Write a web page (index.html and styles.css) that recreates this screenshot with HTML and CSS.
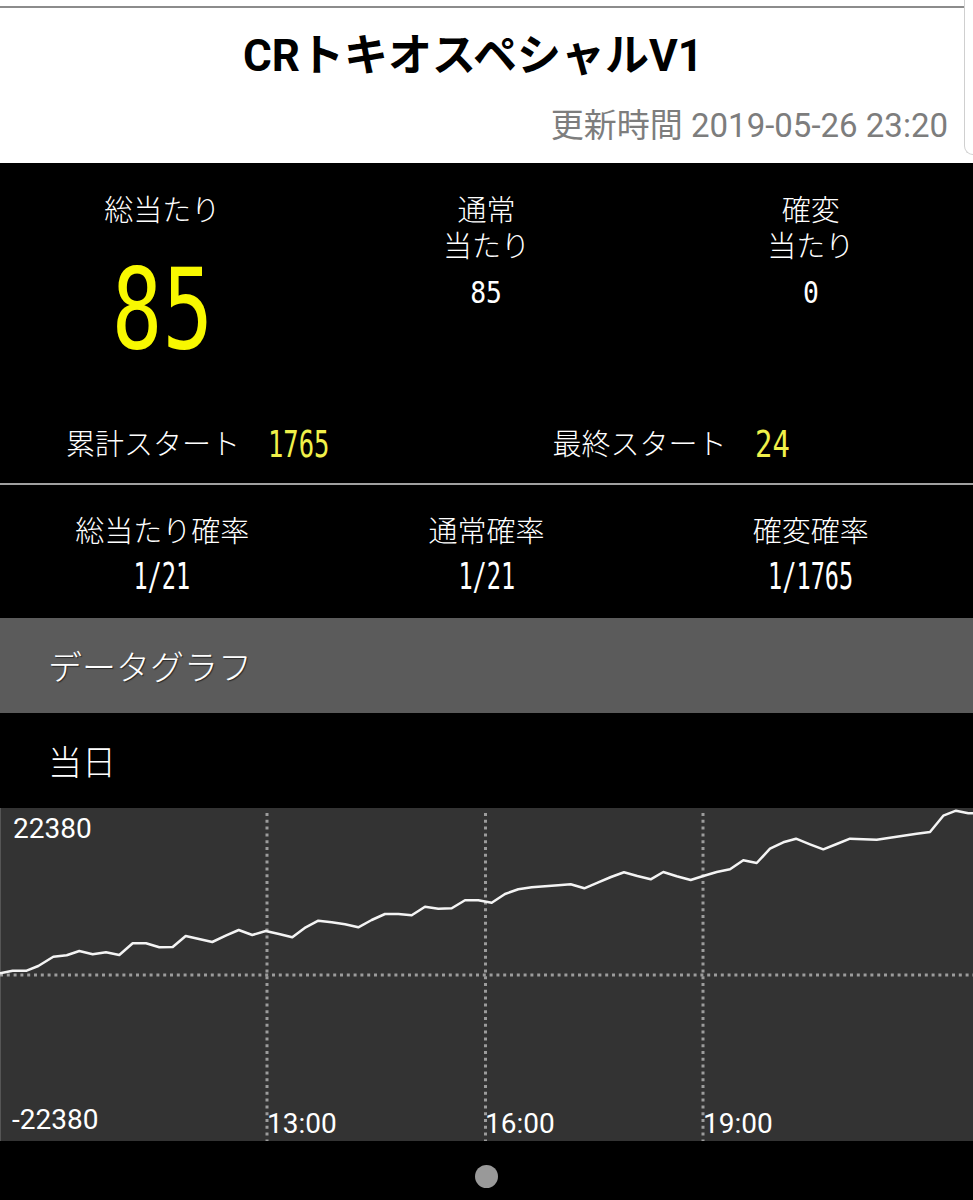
FILE: index.html
```html
<!DOCTYPE html>
<html lang="ja">
<head>
<meta charset="utf-8">
<title>CRトキオスペシャルV1</title>
<link rel="stylesheet" href="styles.css">
</head>
<body>
<header class="header">
  <div class="topline"></div>
  <div class="scroll-edge"></div>
  <h1 class="title">CRトキオスペシャルV1</h1>
  <div class="updated">更新時間 2019-05-26 23:20</div>
</header>

<section class="stats">
  <div class="summary">
    <div class="col">
      <div class="label">総当たり</div>
      <div class="big"><span class="seg seg-big">85</span></div>
    </div>
    <div class="col">
      <div class="label">通常</div>
      <div class="label">当たり</div>
      <div class="small"><span class="seg seg-small">85</span></div>
    </div>
    <div class="col">
      <div class="label">確変</div>
      <div class="label">当たり</div>
      <div class="small"><span class="seg seg-small">0</span></div>
    </div>
  </div>

  <div class="starts">
    <div class="start"><span class="label">累計スタート</span><span class="seg seg-start">1765</span></div>
    <div class="start"><span class="label">最終スタート</span><span class="seg seg-start seg-start2">24</span></div>
  </div>

  <div class="divider"></div>

  <div class="rates">
    <div class="rate">
      <div class="label">総当たり確率</div>
      <div class="rate-val"><span class="seg seg-rate">1/21</span></div>
    </div>
    <div class="rate">
      <div class="label">通常確率</div>
      <div class="rate-val"><span class="seg seg-rate">1/21</span></div>
    </div>
    <div class="rate">
      <div class="label">確変確率</div>
      <div class="rate-val"><span class="seg seg-rate">1/1765</span></div>
    </div>
  </div>
</section>

<div class="section-bar">データグラフ</div>
<div class="subhead">当日</div>

<div class="chart">
  <svg class="chart-svg" width="973" height="333" viewBox="0 0 973 333">
    <g class="grid">
      <line x1="267" y1="5" x2="267" y2="333"/>
      <line x1="485.5" y1="5" x2="485.5" y2="333"/>
      <line x1="703" y1="5" x2="703" y2="333"/>
      <line x1="0" y1="167" x2="973" y2="167"/>
    </g>
    <polyline class="series" points="0,165.3 12.7,162.7 26.7,162.7 38.3,158 53.3,148.7 66.7,147.3 79.3,143 92.7,146.3 106,144.3 119.3,147 132.7,135.3 146,135.3 159.3,139.3 172.7,139 185.7,128 199,131 212.3,134 225.7,127.7 238.7,122 252.3,127 265.7,123 279,126 292.3,129.3 305.7,119.3 318.3,112.7 331.7,114.3 345,116.3 358.3,119.3 371.7,112 385,106 398.3,106 411.7,107.3 425,98.7 438.3,100.7 451.7,100.3 465,92.3 478.3,92.3 491.7,94.7 505,86 518.3,81.3 531.7,79.3 545,78.3 558.3,77.3 570.7,76.3 584.3,80.3 597.7,74.7 611,69 624,64.3 637.3,68 650.7,71.3 663.3,64 676.7,68.3 690.7,72 703.3,68 716.7,64 730,61.3 743.3,52.3 756.7,55 770,40.7 783.3,34.3 796,30.7 810,36.3 823.3,41.3 836.7,36 850,30.7 863.3,31.3 876.7,31.7 890,29.7 903.3,27.7 916.7,25.7 930,24 943.3,7.7 956,2.7 968.3,5.3 973,5.3"/>
    <g class="axis-text">
      <text x="13" y="30">22380</text>
      <text x="12" y="321">-22380</text>
      <text x="267" y="325">13:00</text>
      <text x="485" y="325">16:00</text>
      <text x="703" y="325">19:00</text>
    </g>
  </svg>
</div>

<div class="pager"><span class="dot"></span></div>
</body>
</html>
```

FILE: styles.css
```css
html, body {
  margin: 0;
  padding: 0;
}

body {
  width: 973px;
  background: #000;
  color: #fff;
  font-family: "Noto Sans CJK JP", "Roboto", sans-serif;
}

/* ---------- header ---------- */
.header {
  position: relative;
  height: 163px;
  background: #fff;
  overflow: hidden;
}

.topline {
  width: 964px;
  height: 2px;
  margin-top: 6px;
  background: #8c8c8c;
}

.scroll-edge {
  position: absolute;
  top: 0;
  left: 964px;
  width: 20px;
  height: 154px;
  border-left: 1.5px solid #cfcfcf;
  border-bottom: 1.5px solid #cfcfcf;
  border-bottom-left-radius: 9px;
}

.title {
  margin: 0;
  padding-right: 27px;
  height: 96px;
  line-height: 96px;
  text-align: center;
  font-family: "Roboto", "Noto Sans CJK JP", sans-serif;
  font-size: 44px;
  font-weight: 700;
  color: #000;
}

.updated {
  padding-right: 25px;
  height: 44px;
  line-height: 44px;
  text-align: right;
  font-family: "Roboto", "Noto Sans CJK JP", sans-serif;
  font-size: 33px;
  color: #7d7d7d;
}

/* ---------- stats ---------- */
.stats {
  background: #000;
}

.label {
  font-family: "Roboto", "Noto Sans CJK JP", sans-serif;
  font-size: 29px;
  line-height: 36px;
  font-weight: 300;
  color: #fff;
}

.seg {
  display: inline-block;
  font-family: "DejaVu Sans Mono", "Liberation Mono", monospace;
  font-weight: 400;
}

.summary {
  display: grid;
  grid-template-columns: repeat(3, 1fr);
  padding: 30px 0 55px;
  text-align: center;
}

.big {
  margin-top: 30px;
  height: 100px;
  line-height: 100px;
}

.seg-big {
  font-size: 112px;
  color: #f8f800;
  transform: scaleX(0.75);
}

.small {
  margin-top: 13px;
  height: 30px;
  line-height: 30px;
}

.seg-small {
  font-size: 30px;
  color: #fff;
  transform: scaleX(0.88);
}

.starts {
  display: grid;
  grid-template-columns: 1fr 1fr;
  height: 62px;
  margin-bottom: 7px;
}

.start {
  display: flex;
  align-items: center;
  gap: 28px;
  padding-left: 66px;
}

.start .label {
  line-height: 62px;
}

.seg-start {
  font-size: 37px;
  line-height: 62px;
  color: #f0f04a;
  transform: scaleX(0.69);
  transform-origin: left center;
}

.seg-start2 {
  transform: scaleX(0.78);
}

.divider {
  height: 2px;
  background: #a0a0a0;
}

.rates {
  display: grid;
  grid-template-columns: repeat(3, 1fr);
  padding: 27px 0 22px;
  text-align: center;
}

.rate .label {
  line-height: 40px;
}

.rate-val {
  margin-top: 4px;
  height: 40px;
  line-height: 40px;
}

.seg-rate {
  font-size: 38px;
  color: #fff;
  transform: scaleX(0.62);
}

/* ---------- section bars ---------- */
.section-bar {
  height: 95px;
  line-height: 95px;
  padding-left: 48px;
  background: #5b5b5b;
  font-size: 34px;
  font-weight: 300;
  text-shadow: 1px 1px 1px #2a2a2a;
}

.subhead {
  height: 95px;
  line-height: 95px;
  padding-left: 48px;
  background: #000;
  font-size: 34px;
  font-weight: 300;
}

/* ---------- chart ---------- */
.chart {
  height: 333px;
  background: #333;
  box-shadow: inset 1px 0 0 #555;
}

.chart-svg {
  display: block;
}

.grid line {
  stroke: #9c9c9c;
  stroke-width: 3;
  stroke-dasharray: 3 3.8;
}

.series {
  fill: none;
  stroke: #f4f4f4;
  stroke-width: 2.5;
  stroke-linejoin: round;
}

.axis-text text {
  font-family: "Roboto", sans-serif;
  font-size: 28px;
  fill: #fff;
}

/* ---------- pager ---------- */
.pager {
  height: 59px;
  padding-top: 24px;
  box-sizing: border-box;
  text-align: center;
  background: #000;
}

.dot {
  display: inline-block;
  width: 23px;
  height: 23px;
  border-radius: 50%;
  background: #999;
  vertical-align: top;
}
```
